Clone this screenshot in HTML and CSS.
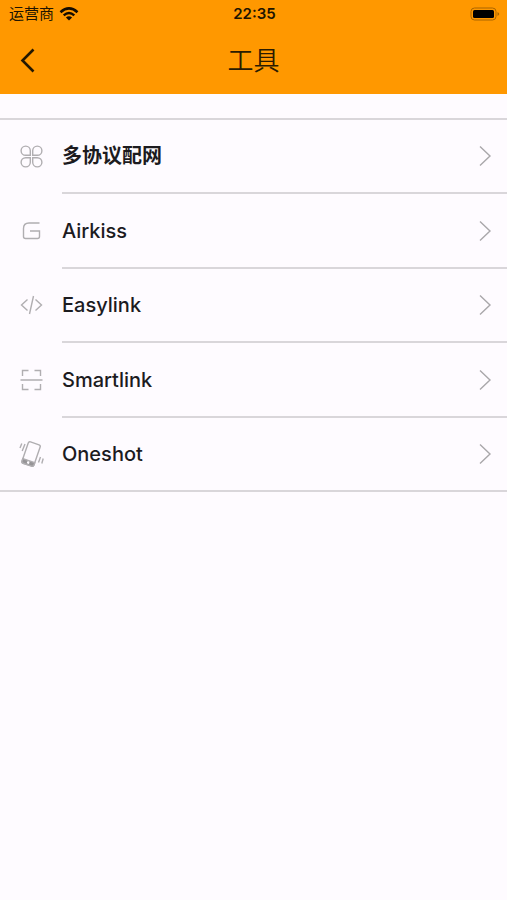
FILE: index.html
```html
<!DOCTYPE html>
<html lang="zh-CN">
<head>
<meta charset="utf-8">
<meta name="viewport" content="width=device-width, initial-scale=1">
<title>工具</title>
<link rel="stylesheet" href="styles.css">
</head>
<body>
<header class="header">
  <div class="status">
    <div class="carrier">
      <span>运营商</span>
      <svg class="wifi" viewBox="0 0 20 14" aria-hidden="true">
        <path d="M1.500 5.200Q10-2.400 18.500 5.200" stroke-width="2.600"/>
        <path d="M4.700 8.400Q10 3.600 15.300 8.400" stroke-width="2.400"/>
        <path class="dot" d="M6.900 10.500Q10 7.900 13.100 10.500L10 13.600Z"/>
      </svg>
    </div>
    <time class="clock">22:35</time>
    <svg class="battery" viewBox="0 0 30 14" aria-hidden="true">
      <rect class="shell" x="1" y="1" width="25" height="12" rx="3.500"/>
      <rect x="3" y="3" width="21" height="8" rx="1.500"/>
      <path class="cap" d="M27.500 5Q31 7 27.500 9Z"/>
    </svg>
  </div>
  <div class="navbar">
    <button class="back" type="button" aria-label="返回">
      <svg viewBox="0 0 16 26" aria-hidden="true"><path d="M13.500 1.500L2.500 12.500L13.500 23.500"/></svg>
    </button>
    <h1 class="title">工具</h1>
  </div>
</header>
<main>
  <ul class="list">
    <li><a class="row" href="#multi">
      <svg class="icon" viewBox="0 0 28 28" aria-hidden="true">
        <path d="M13.300 13.300H8.700A4.600 4.600 0 1 1 13.300 8.700ZM15.700 13.300V8.700A4.600 4.600 0 1 1 20.300 13.300ZM13.300 15.700V20.300A4.600 4.600 0 1 1 8.700 15.700ZM15.700 15.700H20.300A4.600 4.600 0 1 1 15.700 20.300Z"/>
      </svg>
      <span class="label label-cjk">多协议配网</span>
      <svg class="chevron" viewBox="0 0 14 22" aria-hidden="true"><path d="M2 1.500L12 11L2 20.500"/></svg>
    </a></li>
    <li><a class="row" href="#airkiss">
      <svg class="icon" viewBox="0 0 28 28" aria-hidden="true">
        <path d="M22.500 6H12Q6.500 6 6.500 11.500V19.500Q6.500 21.500 8.500 21.500H20.500Q22.500 21.500 22.500 19.500V14H13"/>
      </svg>
      <span class="label">Airkiss</span>
      <svg class="chevron" viewBox="0 0 14 22" aria-hidden="true"><path d="M2 1.500L12 11L2 20.500"/></svg>
    </a></li>
    <li><a class="row" href="#easylink">
      <svg class="icon" viewBox="0 0 28 28" aria-hidden="true">
        <path d="M10.500 8.500L4.500 14L10.500 19.500M18.500 8.500L24.500 14L18.500 19.500M16.500 5L12.500 23"/>
      </svg>
      <span class="label">Easylink</span>
      <svg class="chevron" viewBox="0 0 14 22" aria-hidden="true"><path d="M2 1.500L12 11L2 20.500"/></svg>
    </a></li>
    <li><a class="row" href="#smartlink">
      <svg class="icon" viewBox="0 0 28 28" aria-hidden="true">
        <path d="M3.500 14H25.500M5.500 10V4.500H11.500M17.500 4.500H23.500V10M5.500 18V23.500H11.500M17.500 23.500H23.500V18"/>
      </svg>
      <span class="label">Smartlink</span>
      <svg class="chevron" viewBox="0 0 14 22" aria-hidden="true"><path d="M2 1.500L12 11L2 20.500"/></svg>
    </a></li>
    <li><a class="row" href="#oneshot">
      <svg class="icon phone" viewBox="0 0 28 28" aria-hidden="true">
        <g transform="rotate(19 14 14)">
          <rect x="7.800" y="2.700" width="12.600" height="22.600" rx="1.800"/>
          <path class="base" d="M7.800 21H20.400V23.500Q20.400 25.300 18.600 25.300H9.600Q7.800 25.300 7.800 23.500Z"/>
          <circle class="home" cx="14.100" cy="23" r="1.300"/>
        </g>
        <path d="M4.800 3.500L3 8M8 4L5.200 11M23.500 17L21.500 22.500M26.200 18.500L24.800 23.500"/>
      </svg>
      <span class="label">Oneshot</span>
      <svg class="chevron" viewBox="0 0 14 22" aria-hidden="true"><path d="M2 1.500L12 11L2 20.500"/></svg>
    </a></li>
  </ul>
</main>
</body>
</html>
```
FILE: styles.css
```css
* {
  box-sizing: border-box;
}

body {
  margin: 0;
  min-height: 100vh;
  background: #fefbff;
  color: #1c1b1f;
  font-family: Inter, "Noto Sans CJK SC", sans-serif;
}

svg {
  display: block;
  flex: none;
}

.header {
  background: #ff9800;
}

.status {
  display: grid;
  grid-template-columns: 1fr auto 1fr;
  align-items: center;
  height: 27px;
  padding: 0 7px 0 9px;
  color: #201400;
}

.carrier {
  display: flex;
  align-items: center;
  gap: 5px;
  font-size: 15px;
  line-height: 20px;
}

.wifi {
  width: 20px;
  height: 14px;
  fill: none;
  stroke: #140c00;
}

.wifi .dot {
  fill: #140c00;
  stroke: none;
}

.clock {
  font-size: 15px;
  font-weight: 600;
  line-height: 20px;
}

.battery {
  justify-self: end;
  width: 30px;
  height: 14px;
}

.battery .shell {
  fill: none;
  stroke: #a96500;
}

.battery .cap {
  fill: #a96500;
}

.navbar {
  display: grid;
  grid-template-columns: 56px 1fr 56px;
  align-items: center;
  height: 67px;
}

.back {
  display: grid;
  place-items: center;
  height: 56px;
  padding: 0;
  border: 0;
  background: none;
}

.back svg {
  width: 16px;
  height: 26px;
  fill: none;
  stroke: #241800;
  stroke-width: 2.6;
}

.title {
  margin: 0;
  color: #2a1b00;
  font-size: 26px;
  font-weight: 350;
  line-height: 36px;
  text-align: center;
}

.list {
  display: grid;
  margin: 24px 0 0;
  padding: 0;
  border-top: 2px solid #d9d6da;
  border-bottom: 2px solid #d9d6da;
  list-style: none;
}

.list li + li::before {
  content: "";
  display: block;
  height: 2px;
  margin-left: 62px;
  background: #d9d6da;
}

.row {
  display: flex;
  align-items: center;
  height: 72px;
  padding: 0 15px 0 17px;
  color: inherit;
  text-decoration: none;
}

.list li:nth-child(even) .row {
  height: 73px;
}

.icon {
  width: 28px;
  height: 28px;
  margin-right: 17px;
  fill: none;
  stroke: #b0aeb1;
  stroke-width: 1.4;
}

.phone .base {
  fill: #969497;
}

.phone .home {
  fill: #fefbff;
  stroke: none;
}

.label {
  flex: 1;
  font-size: 20px;
  font-weight: 500;
  line-height: 28px;
}

.label-cjk {
  font-weight: 700;
}

.chevron {
  width: 14px;
  height: 22px;
  fill: none;
  stroke: #a9a7aa;
  stroke-width: 1.4;
}
```
